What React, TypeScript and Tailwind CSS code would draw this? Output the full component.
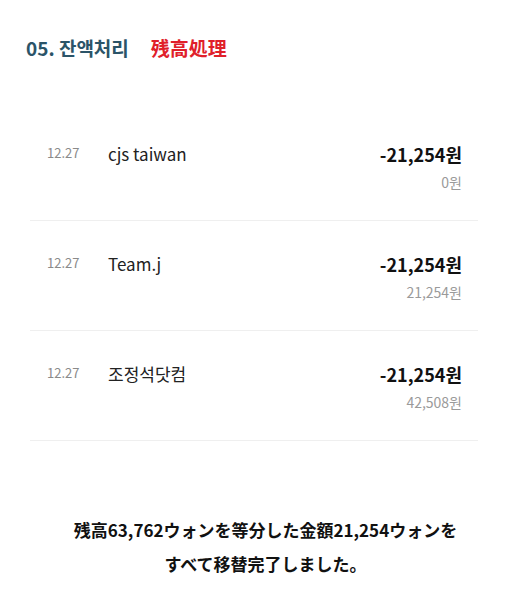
const rows = [
  { date: '12.27', name: 'cjs taiwan', amount: '-21,254원', balance: '0원' },
  { date: '12.27', name: 'Team.j', amount: '-21,254원', balance: '21,254원' },
  { date: '12.27', name: '조정석닷컴', amount: '-21,254원', balance: '42,508원' },
];

export default function App() {
  return (
    <div className="w-[531px] h-[605px] bg-white font-['Noto_Sans_CJK_KR',sans-serif] overflow-hidden">
      {/* Title */}
      <div className="pt-[37px] pl-[26px] flex items-center h-[58px] gap-[22px] text-[19px] font-bold leading-[22px]">
        <span className="text-[#2b5468]">05. 잔액처리</span>
        <span className="text-[#e0202a] font-['Noto_Sans_CJK_JP',sans-serif]">残高処理</span>
      </div>

      {/* Transactions */}
      <div className="mt-[53px] mx-[30px] w-[448px]">
        {rows.map((row) => (
          <div
            key={row.name}
            className="flex justify-between pt-[33px] pb-[28px] pl-[17px] pr-[16px] border-b border-[#efefef]"
          >
            <div className="flex items-center h-[20px]">
              <span className="w-[61px] text-[13px] text-[#8a8a8a] -mt-[2px]">{row.date}</span>
              <span className="text-[17px] text-[#222]">{row.name}</span>
            </div>
            <div className="flex flex-col items-end">
              <span className="h-[20px] leading-[20px] text-[18px] font-bold text-[#111]">{row.amount}</span>
              <span className="mt-[8px] h-[20px] leading-[20px] text-[14px] text-[#9a9a9a]">{row.balance}</span>
            </div>
          </div>
        ))}
      </div>

      {/* Note */}
      <div className="mt-[72px] text-center text-[17px] font-bold leading-[34px] text-[#111] font-['Noto_Sans_CJK_JP',sans-serif]">
        <p>残高63,762ウォンを等分した金額21,254ウォンを</p>
        <p>すべて移替完了しました。</p>
      </div>
    </div>
  );
}
